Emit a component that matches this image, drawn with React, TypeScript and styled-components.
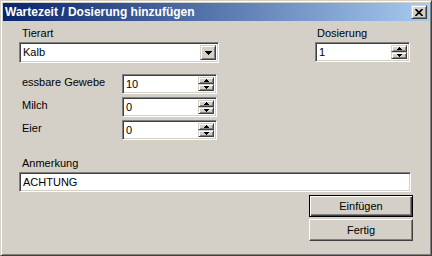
import React from "react";
import styled, { createGlobalStyle, css } from "styled-components";

const GlobalStyle = createGlobalStyle`
  html, body {
    margin: 0;
    padding: 0;
    background: #d4d0c8;
  }
  body {
    font-family: "Liberation Sans", Arial, sans-serif;
    font-size: 11px;
    color: #000;
    overflow: hidden;
  }
`;

const raised = css`
  box-sizing: border-box;
  background: #d4d0c8;
  border: 1px solid;
  border-color: #d4d0c8 #404040 #404040 #d4d0c8;
  box-shadow: inset 1px 1px #fff, inset -1px -1px #808080;
`;

const sunken = css`
  box-sizing: border-box;
  background: #fff;
  border: 1px solid;
  border-color: #808080 #fff #fff #808080;
  box-shadow: inset 1px 1px #404040, inset -1px -1px #d4d0c8;
`;

const Window = styled.div`
  width: 432px;
  height: 256px;
  box-sizing: border-box;
  background: #d4d0c8;
  border: 1px solid;
  border-color: #d4d0c8 #404040 #404040 #d4d0c8;
  box-shadow: inset 1px 1px #fff, inset -1px -1px #808080;
  padding: 2px;
  display: flex;
  flex-direction: column;
`;

const TitleBar = styled.div`
  height: 18px;
  flex: none;
  display: flex;
  align-items: center;
  justify-content: space-between;
  padding: 0 2px 0 2px;
  background: linear-gradient(to right, #0a246a, #a6caf0);
`;

const Title = styled.span`
  color: #fff;
  font-weight: bold;
  font-size: 12px;
  white-space: nowrap;
`;

const CloseButton = styled.div`
  ${raised};
  width: 16px;
  height: 14px;
  display: flex;
  align-items: center;
  justify-content: center;
`;

const Body = styled.div`
  flex: 1;
  display: flex;
  flex-direction: column;
  padding: 6px 18px 0 16px;
`;

const TopRow = styled.div`
  display: flex;
  justify-content: space-between;
`;

const Field = styled.div<{ $width: number }>`
  display: flex;
  flex-direction: column;
  width: ${(p) => p.$width}px;
`;

const Label = styled.div<{ $indent?: number }>`
  line-height: 13px;
  height: 13px;
  padding-left: ${(p) => p.$indent ?? 3}px;
  margin-bottom: 2px;
  white-space: nowrap;
`;

const Box = styled.div<{ $height: number }>`
  ${sunken};
  height: ${(p) => p.$height}px;
  display: flex;
  align-items: stretch;
  padding: 2px;
`;

const BoxText = styled.div`
  flex: 1;
  display: flex;
  align-items: center;
  padding-left: 1px;
  line-height: 13px;
  white-space: nowrap;
  overflow: hidden;
`;

const DropButton = styled.div`
  ${raised};
  width: 16px;
  display: flex;
  align-items: center;
  justify-content: center;
`;

const SpinColumn = styled.div`
  width: 16px;
  display: flex;
  flex-direction: column;
`;

const SpinButton = styled.div`
  ${raised};
  flex: 1;
  display: flex;
  align-items: center;
  justify-content: center;
`;

const AmountGrid = styled.div`
  margin-top: 11px;
  display: grid;
  grid-template-columns: 103px 95px;
  grid-auto-rows: 20px;
  row-gap: 3px;
  align-items: center;
`;

const RowLabel = styled.div`
  padding-left: 3px;
  padding-bottom: 4px;
  white-space: nowrap;
`;

const NoteLabel = styled(Label)`
  margin-top: 17px;
`;

const Buttons = styled.div`
  margin-top: 3px;
  margin-right: -2px;
  align-self: flex-end;
  display: flex;
  flex-direction: column;
  gap: 2px;
`;

const PushButton = styled.div<{ $default?: boolean }>`
  box-sizing: border-box;
  width: 104px;
  height: 22px;
  display: flex;
  align-items: center;
  justify-content: center;
  background: #d4d0c8;
  border: 1px solid;
  ${(p) =>
    p.$default
      ? css`
          border-color: #000;
          box-shadow: inset 1px 1px #fff, inset -1px -1px #404040,
            inset -2px -2px #808080;
        `
      : css`
          border-color: #fff #404040 #404040 #fff;
          box-shadow: inset -1px -1px #808080;
        `}
`;

const Arrow = ({ up, w, h }: { up?: boolean; w: number; h: number }) => (
  <svg width={w} height={h} viewBox={`0 0 ${w} ${h}`} style={{ display: "block" }}>
    <polygon
      points={
        up ? `0,${h} ${w},${h} ${w / 2},0` : `0,0 ${w},0 ${w / 2},${h}`
      }
      fill="#000"
      shapeRendering="crispEdges"
    />
  </svg>
);

const Spin = ({ value, width }: { value: string; width: number }) => (
  <Box $height={20} style={{ width }}>
    <BoxText>{value}</BoxText>
    <SpinColumn>
      <SpinButton>
        <Arrow up w={5} h={3} />
      </SpinButton>
      <SpinButton>
        <Arrow w={5} h={3} />
      </SpinButton>
    </SpinColumn>
  </Box>
);

const amounts = [
  { label: "essbare Gewebe", value: "10" },
  { label: "Milch", value: "0" },
  { label: "Eier", value: "0" },
];

export default function App() {
  return (
    <>
      <GlobalStyle />
      <Window>
        <TitleBar>
          <Title>Wartezeit / Dosierung hinzufügen</Title>
          <CloseButton>
            <svg width="8" height="7" viewBox="0 0 8 7" style={{ display: "block" }}>
              <path d="M0.5 0 L7.5 7 M7.5 0 L0.5 7" stroke="#000" strokeWidth="1.6" />
            </svg>
          </CloseButton>
        </TitleBar>
        <Body>
          <TopRow>
            <Field $width={200}>
              <Label>Tierart</Label>
              <Box $height={21}>
                <BoxText>Kalb</BoxText>
                <DropButton>
                  <Arrow w={7} h={4} />
                </DropButton>
              </Box>
            </Field>
            <Field $width={96}>
              <Label $indent={2}>Dosierung</Label>
              <Spin value="1" width={95} />
            </Field>
          </TopRow>
          <AmountGrid>
            {amounts.map((a) => (
              <React.Fragment key={a.label}>
                <RowLabel>{a.label}</RowLabel>
                <Spin value={a.value} width={95} />
              </React.Fragment>
            ))}
          </AmountGrid>
          <NoteLabel>Anmerkung</NoteLabel>
          <Box $height={20}>
            <BoxText>ACHTUNG</BoxText>
          </Box>
          <Buttons>
            <PushButton $default>Einfügen</PushButton>
            <PushButton>Fertig</PushButton>
          </Buttons>
        </Body>
      </Window>
    </>
  );
}
